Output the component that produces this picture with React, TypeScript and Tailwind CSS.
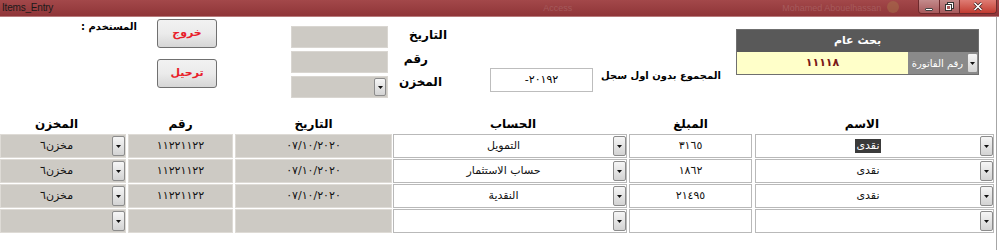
import React from "react";

const Arrow = () => (
  <svg width="5" height="3" viewBox="0 0 5 3">
    <path d="M0 0H5L2.5 3Z" fill="#111" />
  </svg>
);

const DropBtn = ({ cls }: { cls: string }) => (
  <div
    className={
      "flex items-center justify-center pt-[1px] border border-[#8c8c8c] rounded-[2px] bg-linear-to-b from-[#f6f6f6] to-[#d3d3d3] " +
      cls
    }
  >
    <Arrow />
  </div>
);

type Col = { cls: string; grey?: boolean; combo?: boolean; txt: string };

const cols: Col[] = [
  { cls: "w-[126px]", grey: true, combo: true, txt: "" },
  { cls: "w-[105px] ml-[2px]", grey: true, txt: "tracking-[0.6px]" },
  { cls: "w-[157px] ml-[2px]", grey: true, txt: "tracking-[-0.4px]" },
  { cls: "w-[234px] ml-[1px]", combo: true, txt: "" },
  { cls: "w-[123px] ml-[2px]", txt: "tracking-[0.4px]" },
  { cls: "w-[239px] ml-[3px]", combo: true, txt: "" },
];

const headers = ["المخزن", "رقم", "التاريخ", "الحساب", "المبلغ", "الاسم"];
const headerCls = [
  "w-[126px] pr-[13px]",
  "w-[105px] ml-[2px]",
  "w-[157px] ml-[2px]",
  "w-[234px] ml-[1px] pl-[6px]",
  "w-[123px] ml-[2px]",
  "w-[239px] ml-[3px] pr-[25px]",
];

const rows: string[][] = [
  ["مخزن٦", "١١٢٢١١٢٢", "٠٧/١٠/٢٠٢٠", "التمويل", "٣١٦٥", "نقدى"],
  ["مخزن٦", "١١٢٢١١٢٢", "٠٧/١٠/٢٠٢٠", "حساب الاستثمار", "١٨٦٢", "نقدى"],
  ["مخزن٦", "١١٢٢١١٢٢", "٠٧/١٠/٢٠٢٠", "النقدية", "٢١٤٩٥", "نقدى"],
  ["", "", "", "", "", ""],
];

const TitleBar = () => (
  <div className="h-[17px] flex items-start bg-linear-to-b from-[#a3484a] to-[#8f3538] border-b border-[#b87b7c]">
    <div className="pl-[2px] pt-[2px] text-[10px] leading-[12px] text-[#1a1a1a] font-['Liberation_Sans',sans-serif] tracking-[-0.2px]">
      Items_Entry
    </div>
    <div className="ml-[490px] pt-[3px] text-[9px] leading-[10px] text-[#a4595b] font-['Liberation_Sans',sans-serif]">
      Access
    </div>
    <div className="ml-[210px] pt-[3px] text-[9px] leading-[10px] text-[#a65a5c] font-['Liberation_Sans',sans-serif]">
      Mohamed Abouelhassan
    </div>
    <div className="ml-[6px] mt-[1px] w-[12px] h-[12px] rounded-full bg-[#a8744a] opacity-50" />
    <div className="ml-auto mr-[2px] flex h-[14px] rounded-b-[4px] border border-t-0 border-[#6d2a2c] overflow-hidden">
      <div className="w-[21px] h-full flex items-center justify-center bg-linear-to-b from-[#c38a8b] to-[#a85a5c] border-r border-[#6d2a2c]">
        <div className="w-[8px] h-[3px] mt-[5px] bg-white border border-[#444] rounded-[1px]" />
      </div>
      <div className="w-[20px] h-full flex items-center justify-center bg-linear-to-b from-[#c38a8b] to-[#a85a5c] border-r border-[#6d2a2c]">
        <svg width="9" height="9" viewBox="0 0 9 9">
          <rect x="2.5" y="0.5" width="6" height="6" fill="none" stroke="#333" />
          <rect x="3.5" y="1.5" width="4" height="4" fill="none" stroke="#fff" />
          <rect x="0.5" y="2.5" width="6" height="6" fill="#a85a5c" stroke="#333" />
          <rect x="1.5" y="3.5" width="4" height="4" fill="none" stroke="#fff" />
        </svg>
      </div>
      <div className="w-[36px] h-full flex items-center justify-center bg-linear-to-b from-[#de7b73] to-[#c23a30]">
        <svg width="10" height="9" viewBox="0 0 10 9">
          <path d="M1.5 1L8.5 8M8.5 1L1.5 8" stroke="#3a1a1a" strokeWidth="3" />
          <path d="M1.5 1L8.5 8M8.5 1L1.5 8" stroke="#fff" strokeWidth="1.6" />
        </svg>
      </div>
    </div>
  </div>
);

const WinButton = ({ label }: { label: string }) => (
  <div className="w-[60px] h-[29px] flex items-center justify-center rounded-[3px] border border-[#707070] bg-linear-to-b from-[#f2f2f2] via-[#ebebeb] to-[#d6d6d6] text-[#e8202a] text-[11px] font-bold">
    {label}
  </div>
);

const GreyBox = ({ children }: { children?: React.ReactNode }) => (
  <div className="w-[97px] h-[22px] bg-[#cdcac4] border border-[#d9d6d1] flex items-stretch justify-end">
    {children}
  </div>
);

export default function App() {
  return (
    <div className="w-[999px] h-[250px] bg-white overflow-hidden font-['DejaVu_Sans',sans-serif] text-black">
      <TitleBar />
      <div className="flex h-[233px]">
        <div className="w-[996px] flex flex-col">
          {/* top area */}
          <div className="h-[97px] flex items-start">
            <div className="w-[157px] pt-[3px] pr-[20px] flex justify-end">
              <span dir="rtl" className="text-[10px] leading-[14px] font-bold tracking-[-0.2px]">
                المستخدم :
              </span>
            </div>
            <div className="w-[60px] pt-[2px] flex flex-col gap-[11px]">
              <WinButton label="خروج" />
              <WinButton label="ترحيل" />
            </div>
            <div className="ml-[74px] pt-[9px] flex flex-col gap-[3px]">
              <GreyBox />
              <GreyBox />
              <GreyBox>
                <DropBtn cls="w-[12px] my-[1px] mr-[1px]" />
              </GreyBox>
            </div>
            <div className="w-[62px] pt-[10px] flex flex-col items-end text-[12px] font-bold leading-[16px]">
              <div className="h-[22px] pr-[3px]">التاريخ</div>
              <div className="h-[24px] pr-[22px] pt-[2px]">رقم</div>
              <div className="h-[24px] pr-[8px] pt-[1px]">المخزن</div>
            </div>
            <div className="ml-[40px] mt-[51px] w-[103px] h-[24px] border border-[#bdbdbd] flex items-center justify-center text-[11px]">
              <span dir="ltr">-٢٠١٩٢</span>
            </div>
            <div className="w-[143px] mt-[52px] pl-[8px] text-[10px] font-bold leading-[14px]">
              المجموع بدون اول سجل
            </div>
            <div className="mt-[12px] w-[243px] border border-[#6f6f6f] flex flex-col">
              <div className="h-[22px] bg-[#595959] text-white text-[11px] font-bold flex items-center justify-center">
                بحث عام
              </div>
              <div className="h-[22px] flex">
                <div className="w-[171px] bg-[#ffffc9] text-[#7a1818] text-[11px] font-bold flex items-center justify-center tracking-[0.5px]">
                  ١١١١٨
                </div>
                <div className="w-[59px] bg-[#8a8a8a] text-white text-[10px] flex items-center justify-center">
                  رقم الفاتورة
                </div>
                <div className="w-[11px] bg-[#8a8a8a] flex">
                  <DropBtn cls="w-[11px] my-[1px]" />
                </div>
              </div>
            </div>
          </div>

          {/* headers */}
          <div className="h-[20px] flex items-center">
            {headers.map((h, i) => (
              <div key={i} className={"text-center text-[12px] font-bold leading-[16px] " + headerCls[i]}>
                {h}
              </div>
            ))}
          </div>

          {/* rows */}
          <div className="flex flex-col gap-[1px]">
            {rows.map((r, ri) => (
              <div key={ri} className="h-[24px] flex">
                {cols.map((c, ci) => (
                  <div
                    key={ci}
                    className={
                      "h-full flex items-stretch border " +
                      (c.grey ? "bg-[#cdcac4] border-[#dedbd6] " : "bg-white border-[#b9b9b9] ") +
                      c.cls
                    }
                  >
                    <div className={"flex-1 flex items-center justify-center text-[11px] leading-[14px] text-[#111] " + c.txt}>
                      {ri === 0 && ci === 5 ? (
                        <span className="bg-[#3a3a3a] text-white px-[1px]">{r[ci]}</span>
                      ) : (
                        r[ci]
                      )}
                    </div>
                    {c.combo && <DropBtn cls="w-[13px] my-[1px]" />}
                  </div>
                ))}
              </div>
            ))}
          </div>
        </div>
        <div className="w-px bg-[#a6a6a6]" />
      </div>
    </div>
  );
}
